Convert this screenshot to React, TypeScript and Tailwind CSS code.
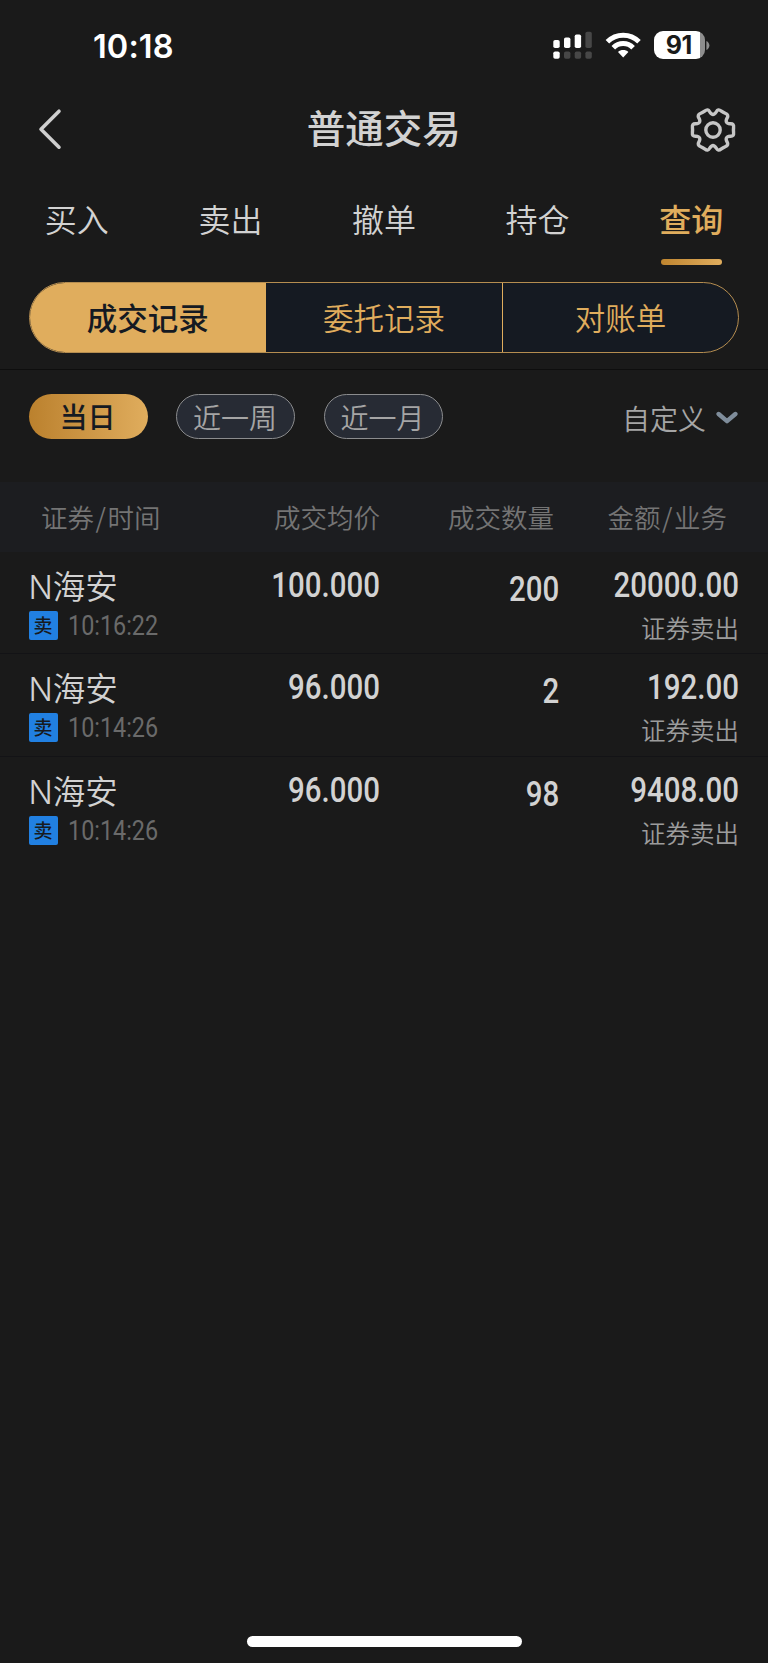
import React from 'react';

const cjk = 'font-["Noto_Sans_CJK_SC",sans-serif]';

const records = [
  { time: '10:16:22', price: '100.000', qty: '200', amount: '20000.00' },
  { time: '10:14:26', price: '96.000', qty: '2', amount: '192.00' },
  { time: '10:14:26', price: '96.000', qty: '98', amount: '9408.00' },
];

const tabs = ['买入', '卖出', '撤单', '持仓', '查询'];

// Six-lobed gear outline, smoothed through the midpoints of its control points.
function gearPath(): string {
  const pts: [number, number][] = [];
  const lobe: [number, number][] = [[-18, 20.3], [-12, 21.3], [0, 20.3], [12, 21.3], [18, 20.3], [21.5, 16.8], [30, 15.2], [38.5, 16.8]];
  for (let k = 0; k < 6; k++) {
    for (const [da, r] of lobe) {
      const a = ((k * 60 + da) * Math.PI) / 180;
      pts.push([24 + r * Math.cos(a), 24 + r * Math.sin(a)]);
    }
  }
  const mid = (p: [number, number], q: [number, number]) =>
    `${((p[0] + q[0]) / 2).toFixed(2)} ${((p[1] + q[1]) / 2).toFixed(2)}`;
  let d = `M${mid(pts[pts.length - 1], pts[0])}`;
  pts.forEach((p, i) => {
    d += `Q${p[0].toFixed(2)} ${p[1].toFixed(2)} ${mid(p, pts[(i + 1) % pts.length])}`;
  });
  return d + 'Z';
}

function StatusBar() {
  return (
    <div className="flex h-[92px] items-start justify-between pl-[93px] pr-[58px]">
      <div className="pt-[27px] font-['Inter',sans-serif] text-[32.5px] leading-10 font-semibold tracking-[0.1px] text-white">10:18</div>
      <div className="flex pt-[31px]">
        <svg width="40" height="28" viewBox="0 0 40 28">
          <g fill="#fff">
            <rect x="0.3" y="9" width="6.4" height="8" rx="1.8" />
            <rect x="11" y="6.5" width="6.4" height="10.5" rx="1.8" />
            <rect x="21.7" y="3.5" width="6.4" height="13.5" rx="1.8" />
            <rect x="0.3" y="20.5" width="6.4" height="7.3" rx="1.8" />
          </g>
          <g fill="#474747">
            <rect x="32.4" y="0.8" width="6.4" height="16.2" rx="1.8" />
            <rect x="11" y="20.5" width="6.4" height="7.3" rx="1.8" />
            <rect x="21.7" y="20.5" width="6.4" height="7.3" rx="1.8" />
            <rect x="32.4" y="20.5" width="6.4" height="7.3" rx="1.8" />
          </g>
        </svg>
        <svg className="ml-[12px]" width="36" height="28" viewBox="0 0 36 28">
          <g fill="none" stroke="#fff" strokeWidth="5">
            <path d="M2.4 10.8C11.2 2 25.2 2 34 10.8" />
            <path d="M8.3 16.8C13.8 11.2 22.6 11.2 28.1 16.8" />
          </g>
          <path d="M13 20.9C15.8 18.4 20.6 18.4 23.4 20.9L18.2 26.4Z" fill="#fff" />
        </svg>
        <div className="ml-[12.5px] flex h-[28px] w-[51.5px] items-center justify-center rounded-[9px] bg-[linear-gradient(90deg,#fff_46px,#8e8e8e_46px)] pr-[1px] font-['Inter',sans-serif] text-[25px] leading-7 font-bold tracking-[-0.5px] text-[#1a1a1a]">
          <span>91</span>
        </div>
        <svg className="mt-[10px] ml-[1px]" width="4" height="9" viewBox="0 0 4 9">
          <path d="M0.4 0C4.4 1.8 4.4 7.2 0.4 9Z" fill="#8e8e8e" />
        </svg>
      </div>
    </div>
  );
}

export default function App() {
  return (
    <div className={`flex h-[1663px] w-[768px] flex-col overflow-hidden bg-[#1a1a1a] text-[#d2d2d2] ${cjk}`}>
      <StatusBar />

      <header className="grid h-[72px] grid-cols-[1fr_auto_1fr] items-center pr-[31.5px] pl-[31px]">
        <svg width="48" height="42" viewBox="-7 0 48 42" className="mt-[2px]">
          <path d="M21 3.2L3 21.2L21 39.2" fill="none" stroke="#cfcfcf" strokeWidth="3.6" strokeLinecap="round" strokeLinejoin="round" />
        </svg>
        <h1 className="-mt-[4px] text-[38.5px] leading-[72px] font-medium">普通交易</h1>
        <svg width="48" height="48" viewBox="0 0 48 48" className="mt-[4px] justify-self-end">
          <g fill="none" stroke="#c6c6c6" strokeWidth="3.4">
            <path d={gearPath()} strokeLinejoin="round" />
            <circle cx="24" cy="24" r="7.2" strokeWidth="3.4" />
          </g>
        </svg>
      </header>

      <nav className="grid h-[118px] grid-cols-5">
        {tabs.map((t, i) => (
          <div key={t} className={i === 4 ? 'flex flex-col items-center pt-[30px] text-[#e0ad5d]' : 'flex flex-col items-center pt-[30px]'}>
            <span className={i === 4 ? 'text-[32px] leading-[48px] font-medium' : 'text-[32px] leading-[48px] font-[350]'}>{t}</span>
            {i === 4 && <span className="mt-[17px] h-[6px] w-[61px] rounded-[3px] bg-linear-to-r from-[#bf852f] to-[#e0ad5d]" />}
          </div>
        ))}
      </nav>

      <div className="mr-[29px] ml-[28.5px] grid h-[70.5px] shrink-0 grid-cols-[236.5px_237px_1fr] overflow-hidden rounded-[36px] border border-[#b58d50] bg-[#151a22] text-center text-[30.5px] leading-[68px] font-[350] text-[#e0ad5d]">
        <div className="bg-[#e0ad5d] text-[#151a22] font-medium">成交记录</div>
        <div className="border-r border-[#e0ad5d]">委托记录</div>
        <div>对账单</div>
      </div>

      <div className="mt-[16.5px] h-px shrink-0 bg-[#0e0e0e]" />

      <div className="flex h-[112px] shrink-0 items-start pt-[23.5px] pr-[30px] pl-[28.5px] text-[28px] text-[#a5a5a5]">
        <button className="h-[45px] w-[119px] rounded-full bg-linear-to-r from-[#bb812d] to-[#e0ad5d] pr-px text-center leading-[45px] font-medium text-[#151a22]">当日</button>
        <button className="ml-[28.5px] h-[45px] w-[119px] rounded-full border border-[#8b8c8e] bg-[#272b34] pr-px text-center leading-[44px] font-[350]">近一周</button>
        <button className="ml-[28.5px] h-[45px] w-[119px] rounded-full border border-[#8b8c8e] bg-[#272b34] pr-px text-center leading-[44px] font-[350]">近一月</button>
        <button className="ml-auto flex items-center gap-[10px] leading-[48px] font-[350]">
          自定义
          <svg width="22" height="14" viewBox="0 0 22 14">
            <path d="M2.6 3L11 10.2L19.4 3" fill="none" stroke="#7f8d9b" strokeWidth="4.4" strokeLinecap="round" strokeLinejoin="round" />
          </svg>
        </button>
      </div>

      <div className="grid h-[70px] shrink-0 grid-cols-[380px_174px_214px] bg-[#1c1d20] text-[26.5px] leading-[69px] font-[350] text-[#747474]">
        <div className="flex justify-between pl-[41px]"><span>证券<span className="px-[1.5px]">/</span>时间</span><span>成交均价</span></div>
        <div className="text-right">成交数量</div>
        <div className="pr-[41px] text-right">金额<span className="px-[1.5px]">/</span>业务</div>
      </div>

      {records.map((r, i) => (
        <div key={i} className={i < 2 ? 'grid h-[102.33px] shrink-0 grid-cols-[200px_180px_180px_1fr] border-b border-[#131316] pr-[29px]' : 'grid h-[102.33px] shrink-0 grid-cols-[200px_180px_180px_1fr] pr-[29px]'}>
          <div className="pl-[28.5px]">
            <div className="h-[57px] pt-[9px] text-[32.5px] leading-[48px] font-[350]"><span className="font-['Inter',sans-serif] text-[32px] font-[350]">N</span>海安</div>
            <div className="mt-[2px] flex h-[29px] items-center">
              <span className="h-[29px] w-[29px] rounded-[2px] bg-[#2180e2] text-center text-[19px] leading-[28px] font-medium text-[#171a20]">卖</span>
              <span className="ml-[10.5px] origin-left scale-x-[0.85] font-['Roboto',sans-serif] text-[27.5px] leading-[29px] whitespace-nowrap text-[#6a6a6a]">{r.time}</span>
            </div>
          </div>
          <div className="origin-right scale-x-[0.835] pt-[13px] text-right font-['Roboto',sans-serif] text-[35.3px] leading-10 font-medium">{r.price}</div>
          <div className="origin-right scale-x-[0.835] pt-[17px] pr-px text-right font-['Roboto',sans-serif] text-[35.3px] leading-10 font-medium">{r.qty}</div>
          <div className="text-right">
            <div className="origin-right scale-x-[0.835] pt-[13px] font-['Roboto',sans-serif] text-[35.3px] leading-10 font-medium">{r.amount}</div>
            <div className="mt-[5px] text-[24.5px] leading-9 font-[350] text-[#9c9c9c]">证券卖出</div>
          </div>
        </div>
      ))}

      <div className="mt-auto mb-[16px] h-[11px] w-[275px] shrink-0 self-center rounded-full bg-white" />
    </div>
  );
}
